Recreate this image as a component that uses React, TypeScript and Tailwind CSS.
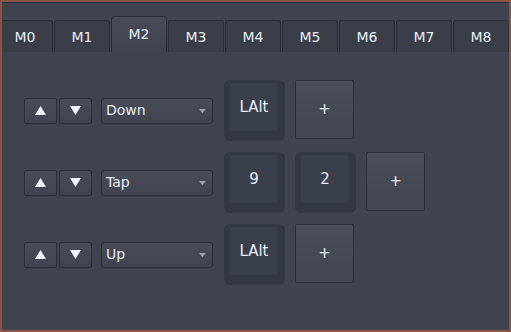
const tabs = ["M0", "M1", "M2", "M3", "M4", "M5", "M6", "M7", "M8"];

type Row = { mode: string; keys: string[] };

const rows: Row[] = [
  { mode: "Down", keys: ["LAlt"] },
  { mode: "Tap", keys: ["9", "2"] },
  { mode: "Up", keys: ["LAlt"] },
];

function Tri({ up }: { up?: boolean }) {
  return (
    <svg width="11" height="9" viewBox="0 0 11 9">
      {up ? <polygon points="5.5,0 11,9 0,9" fill="#f2f6fa" /> : <polygon points="0,0 11,0 5.5,9" fill="#f2f6fa" />}
    </svg>
  );
}

function KeyCap({ label }: { label: string }) {
  return (
    <div className="h-[61px] w-[61px] shrink-0 rounded-[6px] bg-[#333844] pl-[6px] pt-[3px]">
      <div className="flex h-[48px] w-[48px] items-center justify-center rounded-[4px] bg-[#3a3f4c] text-[15px] text-[#e8edf3]">
        {label}
      </div>
    </div>
  );
}

export default function App() {
  return (
    <div
      className="flex h-[332px] w-[511px] flex-col overflow-hidden border-2 border-[#8b5448] bg-[#3f4450]"
      style={{ fontFamily: '"DejaVu Sans", sans-serif' }}
    >
      <div className="h-px bg-[#2c3038]" />
      <div className="mt-[13px] flex h-[36px] items-end gap-px overflow-hidden">
        <div className="flex -ml-[5px] items-end gap-px">
          {tabs.map((t) =>
            t === "M2" ? (
              <div
                key={t}
                className="flex h-[36px] w-[56px] shrink-0 items-center justify-center rounded-t-[4px] border border-b-0 border-[#2b2f37] bg-gradient-to-b from-[#474c58] to-[#3f4450] pb-[1px] text-[14px] text-[#e8edf3]"
              >
                {t}
              </div>
            ) : (
              <div
                key={t}
                className="flex h-[32px] w-[56px] shrink-0 items-center justify-center rounded-t-[3px] border border-b-0 border-[#2b2f37] bg-[#393e49] pt-[1px] text-[14px] text-[#e8edf3]"
              >
                {t}
              </div>
            )
          )}
        </div>
      </div>
      <div className="flex flex-col gap-[11px] pl-[22px] pt-[28px]">
        {rows.map((r, i) => (
          <div key={i} className="flex items-center">
            <div className="flex gap-[2px]">
              <button className="flex h-[26px] w-[33px] items-center justify-center rounded-[2px] border border-[#2a2e37] bg-gradient-to-b from-[#474c58] to-[#3f4450]">
                <Tri up />
              </button>
              <button className="flex h-[26px] w-[33px] items-center justify-center rounded-[2px] border border-[#2a2e37] bg-gradient-to-b from-[#474c58] to-[#3f4450]">
                <Tri />
              </button>
            </div>
            <div className="ml-[9px] flex h-[26px] w-[112px] items-center justify-between rounded-[3px] border border-[#2a2e37] bg-gradient-to-b from-[#474c58] to-[#3f4450] pl-[4px] pr-[6px] text-[14px] text-[#e8edf3]">
              <span>{r.mode}</span>
              <svg width="7" height="4" viewBox="0 0 7 4">
                <polygon points="0,0 7,0 3.5,4" fill="#a3a7ae" />
              </svg>
            </div>
            <div className="ml-[11px] flex items-start gap-[10px] self-start">
              {r.keys.map((k, j) => (
                <KeyCap key={j} label={k} />
              ))}
              <button className="flex h-[59px] w-[59px] items-center justify-center rounded-[2px] border border-[#2a2e37] bg-gradient-to-b from-[#4a4f5b] to-[#40454f] text-[15px] text-[#e8edf3]">
                +
              </button>
            </div>
          </div>
        ))}
      </div>
    </div>
  );
}
